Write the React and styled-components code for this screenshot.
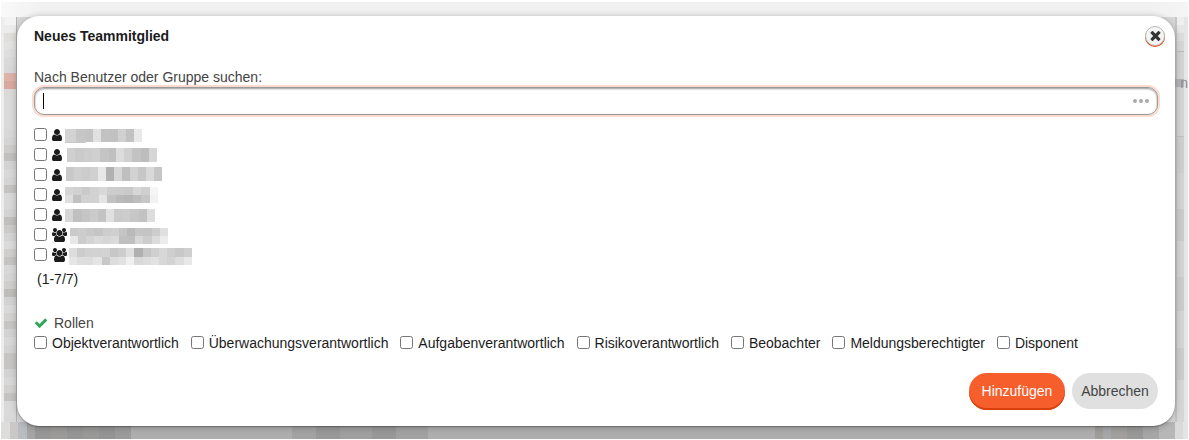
import React from 'react';
import styled, { createGlobalStyle } from 'styled-components';

const GlobalStyle = createGlobalStyle`
  * { box-sizing: border-box; }
  body {
    margin: 0;
    background: #fff;
    overflow: hidden;
    font: 14px/20px "Liberation Sans", Arial, sans-serif;
    color: #1c1c1c;
  }
`;

const Stage = styled.div`
  position: relative;
  width: 1189px;
  height: 440px;
  overflow: hidden;
`;

const Backdrop = styled.div`
  display: flex;
  flex-direction: column;
  height: 439px;
  padding: 2px 1px 0 1px;
`;

const BackTop = styled.div`
  height: 15px;
  flex: none;
  background: linear-gradient(90deg, #f9f9f9, #f1f1f1 40px, #f1f1f1 1150px, #f5f5f5);
`;

const BackMiddle = styled.div`
  display: flex;
  justify-content: space-between;
  height: 405px;
  flex: none;
  background: #d8d8d8;
`;

const LeftStrip = styled.div`
  width: 16px;
  border-left: 3px solid #ededed;
  border-right: 1px solid #b2b2b2;
`;

const Tile = styled.div`
  height: ${(p) => p.$h || 8}px;
  background: ${(p) => p.$c};
`;

const RightStrip = styled.div`
  width: 13px;
  border-left: 2px solid #c6c6c6;
  border-right: 4px solid #e6e6e6;
`;

const ClippedWord = styled.div`
  display: flex;
  width: 13px;
  height: 8px;
  margin-left: -2px;
  background: linear-gradient(90deg, #b3b3b3 9px, #e2e2e2 9px);
  line-height: 8px;
  color: #8e8e98;
  justify-content: flex-end;
`;

const BackBottom = styled.div`
  display: flex;
  height: 17px;
  flex: none;
`;

const Segment = styled.div`
  width: ${(p) => p.$w}px;
  background: ${(p) => p.$c};
`;

const Dialog = styled.section`
  position: absolute;
  left: 17px;
  top: 16px;
  width: 1158px;
  height: 410px;
  padding: 0 10px 0 17px;
  border-radius: 22px;
  background: #fff;
  box-shadow: 0 1px 1px rgba(0, 0, 0, 0.25), 0 1px 7px rgba(0, 0, 0, 0.28);
`;

const Header = styled.header`
  display: flex;
  align-items: center;
  justify-content: space-between;
  height: 40px;
`;

const Title = styled.h1`
  margin: 0;
  font-size: 14px;
  line-height: 20px;
`;

const CloseButton = styled.button`
  display: flex;
  align-items: center;
  justify-content: center;
  width: 20px;
  height: 20px;
  padding: 0;
  border: 1px solid #b9b9b9;
  border-radius: 50%;
  background: #f4f4f4;
  color: #333;
  box-shadow: 0 1px 0 #e8430f;
`;

const Body = styled.div`
  display: flex;
  flex-direction: column;
  margin-right: 7px;
  padding-top: 11px;
`;

const FieldLabel = styled.label`
  color: #444;
`;

const SearchField = styled.div`
  display: flex;
  align-items: center;
  justify-content: space-between;
  height: 28px;
  padding: 0 8px;
  border: 1px solid #999;
  border-radius: 10px;
  box-shadow: 0 0 0 2px #fddbd0, inset 0 1px 2px #999;
`;

const Caret = styled.span`
  width: 1px;
  height: 16px;
  background: #000;
`;

const Dots = styled.span`
  display: flex;
  gap: 2px;
  i {
    width: 4px;
    height: 4px;
    border-radius: 50%;
    background: #aaa;
  }
`;

const MemberList = styled.div`
  margin-top: 10px;
`;

const MemberRow = styled.label`
  display: flex;
  align-items: center;
  height: 20px;
`;

const Checkbox = styled.input.attrs({ type: 'checkbox' })`
  width: 13px;
  height: 13px;
  margin: 0 5px 1px 0;
  flex: none;
`;

const Glyph = styled.svg`
  display: block;
  height: ${(p) => p.$size || 14}px;
  flex: none;
  fill: currentColor;
`;

const Redacted = styled.span`
  align-self: flex-start;
  margin-top: ${(p) => p.$top}px;
  margin-left: ${(p) => p.$left}px;
`;

const RedactedLine = styled.span`
  display: flex;
  height: ${(p) => p.$h}px;
`;

const RedactedCell = styled.span`
  width: ${(p) => p.$w}px;
  background: ${(p) => p.$c};
`;

const Count = styled.div`
  margin-top: 4px;
  padding-left: 3px;
`;

const RolesHeading = styled.div`
  display: flex;
  align-items: center;
  gap: 6px;
  margin-top: 24px;
  color: #444;
`;

const CheckGlyph = styled(Glyph)`
  color: #2fa65a;
`;

const Roles = styled.div`
  display: flex;
  gap: 11.89px;
`;

const Role = styled.label`
  display: flex;
  align-items: center;
  white-space: nowrap;
`;

const Actions = styled.footer`
  display: flex;
  justify-content: flex-end;
  align-items: flex-start;
  gap: 7px;
  margin-top: 20px;
`;

const Button = styled.button`
  width: ${(p) => (p.$primary ? 96 : 86)}px;
  height: ${(p) => (p.$primary ? 37 : 36)}px;
  padding: 0 0 ${(p) => (p.$primary ? 1 : 0)}px;
  border: 0;
  border-radius: 18px;
  font: inherit;
  color: ${(p) => (p.$primary ? '#fff' : '#444')};
  background: ${(p) => (p.$primary ? '#f65e2c' : '#e0e0e0')};
  box-shadow: ${(p) => (p.$primary ? 'inset 0 -2px 0 #db3f0b' : 'none')};
`;

const PATHS = {
  user: 'M1280 1399q0 109-62.5 187t-150.5 78h-854q-88 0-150.5-78t-62.5-187q0-85 8.5-160.5t31.5-152 58.5-131 94-89 134.5-34.5q131 128 313 128t313-128q76 0 134.5 34.5t94 89 58.5 131 31.5 152 8.5 160.5zm-256-887q0 159-112.5 271.5t-271.5 112.5-271.5-112.5-112.5-271.5 112.5-271.5 271.5-112.5 271.5 112.5 112.5 271.5z',
  group: 'M593 896q-162 5-265 128h-134q-82 0-138-40.5t-56-118.5q0-353 124-353 6 0 43.5 21t97.5 42.5 119 21.5q67 0 133-23-5 37-5 66 0 159 93 293zm1071 637q0 120-73 189.5t-194 69.5h-874q-121 0-194-69.5t-73-189.5q0-53 3.5-103.5t14-109 26.5-108.5 43-97.5 62-81 85.5-53.5 111.5-20q10 0 43 21.5t73 48 107 48 135 21.5 135-21.5 107-48 73-48 43-21.5q61 0 111.5 20t85.5 53.5 62 81 43 97.5 26.5 108.5 14 109 3.5 103.5zm-1024-1277q0 106-75 181t-181 75-181-75-75-181 75-181 181-75 181 75 75 181zm704 384q0 159-112.5 271.5t-271.5 112.5-271.5-112.5-112.5-271.5 112.5-271.5 271.5-112.5 271.5 112.5 112.5 271.5zm576 225q0 78-56 118.5t-138 40.5h-134q-103-123-265-128 93-134 93-293 0-29-5-66 66 23 133 23 59 0 119-21.5t97.5-42.5 43.5-21q124 0 124 353zm-128-609q0 106-75 181t-181 75-181-75-75-181 75-181 181-75 181 75 75 181z',
  check: 'M1671 566q0 40-28 68l-724 724-136 136q-28 28-68 28t-68-28l-136-136-362-362q-28-28-28-68t28-68l136-136q28-28 68-28t68 28l294 295 656-657q28-28 68-28t68 28l136 136q28 28 28 68z',
  close: 'M1490 1322q0 40-28 68l-136 136q-28 28-68 28t-68-28l-294-294-294 294q-28 28-68 28t-68-28l-136-136q-28-28-28-68t28-68l294-294-294-294q-28-28-28-68t28-68l136-136q28-28 68-28t68 28l294 294 294-294q28-28 68-28t68 28l136 136q28 28 28 68t-28 68l-294 294 294 294q28 28 28 68z',
};

// Each line: cell height, then "width:grey" cells from left to right.
const MEMBERS = [
  { icon: 'user', left: 3, top: 4, lines: [[13, '11:d3 10:c6 7:c3 8:e1 9:c2 8:c1 8:d0 8:c2 8:e9'], [1, '21:c8']] },
  { icon: 'user', left: 5, top: 3, lines: [[14, '8:cf 9:ca 8:cd 8:cf 9:c4 7:c0 8:dc 8:d0 9:c3 8:bd 8:d6']] },
  { icon: 'user', left: 4, top: 2, lines: [[14, '8:c9 8:cf 8:cc 8:d0 8:e7 8:b1 8:d6 8:bf 8:d2 8:c7 8:d9 8:c6']] },
  { icon: 'user', left: 3, top: 2, lines: [[8, '8:d5 9:d1 8:ca 9:d2 8:d8 9:cd 8:cc 9:c9 8:d6 9:cf 8:f5'], [8, '8:de 8:c1 9:d1 9:d2 8:e4 9:c2 8:ba 9:b6 8:bd 9:c7 8:f2']] },
  { icon: 'user', left: 3, top: 4, lines: [[13, '8:d6 9:c0 8:c5 8:cb 8:c3 8:e0 8:ca 8:cd 9:c7 8:c2 8:dd']] },
  { icon: 'group', left: 3, top: 3, lines: [[8, '8:ca 8:cd 8:c9 9:c6 8:cd 8:cf 8:c5 8:ba 8:c5 9:c4 8:cd 8:e0'], [8, '8:e8 8:cc 8:d4 9:da 8:d6 8:da 8:c0 8:bf 8:d7 9:cd 8:dc 8:ec']] },
  { icon: 'group', left: 2, top: 3, lines: [[9, '8:dc 8:cc 8:d1 9:d2 8:d3 8:c7 8:cd 8:df 9:b0 8:c6 8:cf 8:d8 8:ce 9:c8 8:cf'], [8, '8:e6 8:de 8:dd 9:e4 8:c8 8:dd 8:e2 8:f0 9:d9 8:dd 8:e2 8:d7 8:d3 9:dd 8:e8']] },
];

const ROLES = [
  'Objektverantwortlich',
  'Überwachungsverantwortlich',
  'Aufgabenverantwortlich',
  'Risikoverantwortlich',
  'Beobachter',
  'Meldungsberechtigter',
  'Disponent',
];

const LEFT_TILES = (
  'f3f3f3 ececec dfdedb e2e2e1 dedede dadada d8d8d8 ddb3a8 d9a99f dadada dadada dadada dadada dadada ' +
  'd8d8d8 d4d4d4 cdcccb c1c0be d3d3d3 d8d8d8 d4d4d4 c4c3c1 d8d8d8 d8d8d8 d3d3d3 c0bfbd cbcac9 d4d4d4 ' +
  'dadada cfcecd c5c4c3 d8d8d8 d4d4d4 cfcecc bebdba d2d2d2 d9d9d9 d3d2d0 c6c5c3 d2d2d2 d8d8d8 d3d3d3 ' +
  'c6c5c4 c6c5c4 d3d3d3 d8d8d8 d2d1cf c4c3c1 dadada dadada'
).split(' ');

const RIGHT_TILES = [
  [8, '#efefef'], [8, '#e6e6e6'], [8, '#dddddd'], [10, '#d6d6d6'], [1, '#b9b9b9'], [27, '#d3d3d3'],
];

const RIGHT_TILES_LOWER = [
  [49, '#d4d4d4'], [1, '#c2c2c2'], [36, '#cecece'], [36, '#d3d3d3'], [32, '#cbcbcb'],
  [36, '#d3d3d3'], [34, '#cccccc'], [37, '#d4d4d4'], [32, '#cccccc'], [43, '#d6d6d6'],
];

const BOTTOM_SEGMENTS = [
  [9, '#dddddb'], [8, '#c9c8c6'], [9, '#b8bcc0'], [8, '#a5a5a5'], [16, '#989898'], [16, '#9c9b9a'],
  [16, '#959595'], [16, '#999998'], [16, '#949494'], [16, '#9b9b9b'], [161, '#aeaeae'],
  [24, '#a3a3a3'], [24, '#999'], [32, '#9f9f9f'], [24, '#989898'], [32, '#a1a2a1'],
  [667, '#aeaeae'], [8, '#9f9d9a'], [8, '#a5a7aa'], [16, '#a09f9d'], [16, '#999998'],
  [16, '#a6a6a6'], [16, '#b7b7b7'], [8, '#dadada'], [5, '#e4e4e4'],
];

const Icon = ({ name, box, size }) => (
  <Glyph $size={size} viewBox={box} aria-hidden="true"><path d={PATHS[name]} /></Glyph>
);

const Member = ({ icon, left, top, lines }) => (
  <MemberRow>
    <Checkbox />
    <Icon name={icon} box={icon === 'user' ? '0 0 1280 1792' : '0 0 1920 1792'} />
    <Redacted $left={left} $top={top}>
      {lines.map(([height, cells], i) => (
        <RedactedLine key={i} $h={height}>
          {cells.split(' ').map((cell, j) => {
            const [w, g] = cell.split(':');
            return <RedactedCell key={j} $w={w} $c={`#${g}${g}${g}`} />;
          })}
        </RedactedLine>
      ))}
    </Redacted>
  </MemberRow>
);

export default function App() {
  return (
    <Stage>
      <GlobalStyle />
      <Backdrop aria-hidden="true">
        <BackTop />
        <BackMiddle>
          <LeftStrip>
            {LEFT_TILES.map((c, i) => <Tile key={i} $c={`#${c}`} />)}
          </LeftStrip>
          <RightStrip>
            {RIGHT_TILES.map(([h, c], i) => <Tile key={i} $h={h} $c={c} />)}
            <ClippedWord>n</ClippedWord>
            {RIGHT_TILES_LOWER.map(([h, c], i) => <Tile key={i} $h={h} $c={c} />)}
          </RightStrip>
        </BackMiddle>
        <BackBottom>
          {BOTTOM_SEGMENTS.map(([w, c], i) => <Segment key={i} $w={w} $c={c} />)}
        </BackBottom>
      </Backdrop>

      <Dialog role="dialog">
        <Header>
          <Title>Neues Teammitglied</Title>
          <CloseButton aria-label="Schließen">
            <Icon name="close" box="0 132 1792 1792" size={15} />
          </CloseButton>
        </Header>
        <Body>
          <FieldLabel>Nach Benutzer oder Gruppe suchen:</FieldLabel>
          <SearchField>
            <Caret />
            <Dots><i /><i /><i /></Dots>
          </SearchField>
          <MemberList>
            {MEMBERS.map((m, i) => <Member key={i} {...m} />)}
          </MemberList>
          <Count>(1-7/7)</Count>
          <RolesHeading>
            <CheckGlyph viewBox="0 0 1792 1792" aria-hidden="true"><path d={PATHS.check} /></CheckGlyph>
            Rollen
          </RolesHeading>
          <Roles>
            {ROLES.map((role) => <Role key={role}><Checkbox />{role}</Role>)}
          </Roles>
          <Actions>
            <Button $primary>Hinzufügen</Button>
            <Button>Abbrechen</Button>
          </Actions>
        </Body>
      </Dialog>
    </Stage>
  );
}
